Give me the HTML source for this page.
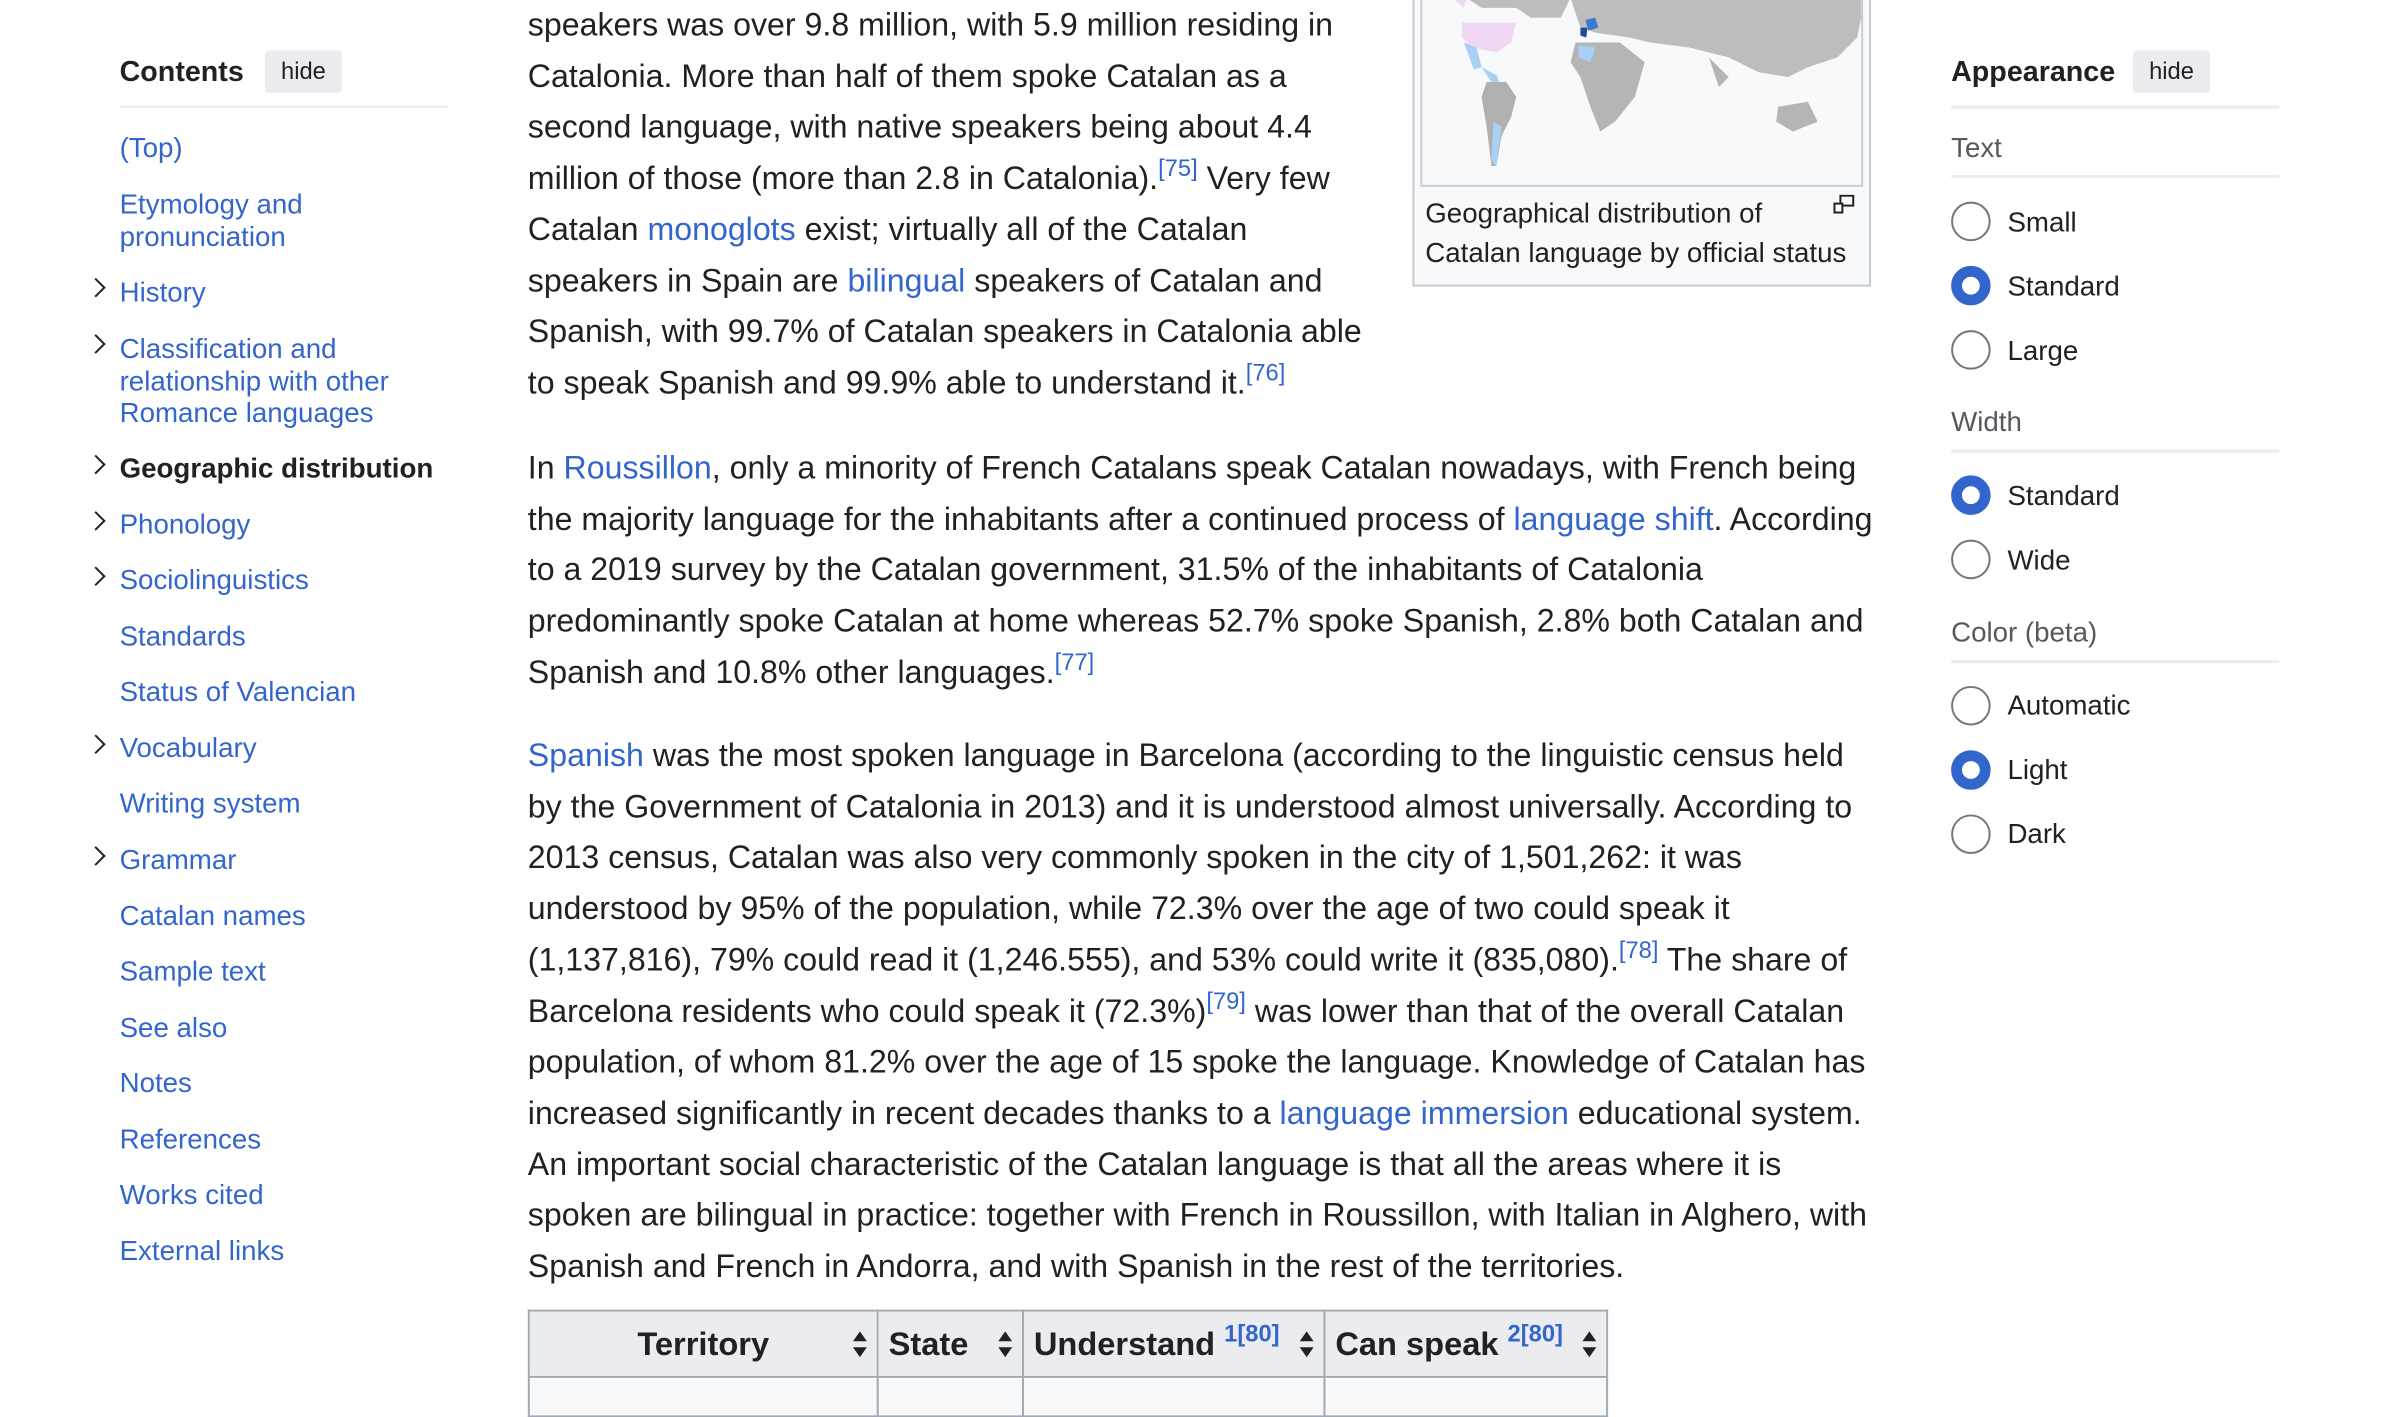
<!DOCTYPE html>
<html><head><meta charset="utf-8"><style>
*{margin:0;padding:0;box-sizing:border-box}
body{width:2400px;height:1398px;overflow:hidden;background:#fff;font-family:"Liberation Sans",Arial,sans-serif;color:#202122;position:relative}
#w{position:absolute;left:0;top:0;width:2430px;height:1420px;transform:scale(0.9884);transform-origin:0 0}
a{color:#3366cc;text-decoration:none}
.p{position:absolute;left:534px;font-size:32.5px;line-height:51.7px;white-space:nowrap}
sup{font-size:24px;vertical-align:0;position:relative;top:-13px;color:#3366cc;line-height:0}
.toc{position:absolute;left:121px;font-size:28px;line-height:32.5px;color:#3366cc;white-space:nowrap}
.chev{position:absolute;left:90px;width:14px;height:14px;border-right:2.5px solid #202122;border-top:2.5px solid #202122;transform:rotate(45deg)}
.hdr{position:absolute;font-size:29px;font-weight:bold;line-height:32px}
.hide{position:absolute;background:#eaecf0;border-radius:4px;font-size:24px;line-height:43px;text-align:center;color:#202122}
.rule{position:absolute;height:3px;background:#eaecf0}
.lbl{position:absolute;left:1974px;font-size:28px;color:#54595d;line-height:32px}
.r{position:absolute;left:1974px;width:40px;height:40px;border-radius:50%;border:2.5px solid #72777d;background:#fff}
.r.on{border:11px solid #3366cc}
.rt{position:absolute;left:2031px;font-size:28px;line-height:32px}
th{background:#eaecf0;border:2px solid #a2a9b1;font-size:33px;font-weight:bold;height:67px;padding:0 10px;text-align:left;position:relative}
td{background:#f8f9fa;border:2px solid #a2a9b1;height:40px}
.sort{position:absolute;right:10px;top:20px;width:14px;height:26px}
.sort:before,.sort:after{content:"";position:absolute;left:0;border-left:7px solid transparent;border-right:7px solid transparent}
.sort:before{top:0;border-bottom:10px solid #202122}
.sort:after{bottom:0;border-top:10px solid #202122}
th sup{font-size:24px;top:-14px}
</style></head><body><div id="w">

<div class="hdr" style="left:121px;top:57px">Contents</div>
<div class="hide" style="left:268px;top:51px;width:78px">hide</div>
<div class="rule" style="left:121px;top:107px;width:333px;height:2px"></div>
<div class="toc" style="top:134px">(Top)</div>
<div class="toc" style="top:191px">Etymology and<br>pronunciation</div>
<div class="chev" style="top:284px"></div><div class="toc" style="top:280px">History</div>
<div class="chev" style="top:341px"></div><div class="toc" style="top:337px">Classification and<br>relationship with other<br>Romance languages</div>
<div class="chev" style="top:463px"></div><div class="toc" style="top:458px;color:#202122;font-weight:bold">Geographic distribution</div>
<div class="chev" style="top:520px"></div><div class="toc" style="top:515px">Phonology</div>
<div class="chev" style="top:576px"></div><div class="toc" style="top:571px">Sociolinguistics</div>
<div class="toc" style="top:628px">Standards</div>
<div class="toc" style="top:684px">Status of Valencian</div>
<div class="chev" style="top:746px"></div><div class="toc" style="top:741px">Vocabulary</div>
<div class="toc" style="top:797px">Writing system</div>
<div class="chev" style="top:859px"></div><div class="toc" style="top:854px">Grammar</div>
<div class="toc" style="top:911px">Catalan names</div>
<div class="toc" style="top:967px">Sample text</div>
<div class="toc" style="top:1024px">See also</div>
<div class="toc" style="top:1080px">Notes</div>
<div class="toc" style="top:1137px">References</div>
<div class="toc" style="top:1193px">Works cited</div>
<div class="toc" style="top:1250px">External links</div>

<div style="position:absolute;left:1429px;top:-4px;width:464px;height:294px;background:#f8f9fa;border:2px solid #c8ccd1"></div>
<div style="position:absolute;left:1437px;top:-4px;width:448px;height:193px;border:2px solid #c8ccd1;background:#f8f9fa;overflow:hidden">
<svg width="448" height="193" viewBox="0 0 448 193">
<path d="M30 0 L45 0 L42 10 Z" fill="#f0d7f4"/>
<path d="M45 0 L150 0 L140 20 L110 20 L95 10 L60 10 Z" fill="#bdbdbd"/>
<path d="M40 25 L95 25 L90 45 L75 55 L50 50 L40 40 Z" fill="#f0d7f4"/>
<path d="M42 45 L55 50 L60 70 L52 72 Z" fill="#a9d0f7"/>
<path d="M60 70 L75 78 L80 90 L70 85 Z" fill="#a9d0f7"/>
<path d="M65 85 L85 85 L95 100 L90 120 L80 140 L75 170 L70 170 L65 130 L60 100 Z" fill="#b0b0b0"/>
<path d="M72 125 L80 130 L75 170 L70 165 Z" fill="#a9d0f7"/>
<path d="M150 0 L448 0 L440 40 L420 60 L390 70 L370 80 L340 75 L310 60 L270 50 L230 45 L210 40 L175 35 L160 30 Z" fill="#bdbdbd"/>
<path d="M155 45 L200 45 L225 65 L215 100 L195 125 L180 135 L170 110 L160 80 L150 65 Z" fill="#b5b5b5"/>
<path d="M158 48 L175 50 L170 65 L158 60 Z" fill="#a9d0f7"/>
<path d="M165 22 L175 20 L178 30 L168 33 Z" fill="#3b78d0"/>
<path d="M160 30 L167 30 L166 40 L160 38 Z" fill="#1d4e96"/>
<path d="M360 110 L390 105 L400 125 L375 135 L358 125 Z" fill="#b5b5b5"/>
<path d="M290 60 L310 80 L300 90 Z" fill="#b5b5b5"/>
</svg></div>
<div style="position:absolute;left:1442px;top:196px;font-size:28px;line-height:40px;white-space:nowrap">Geographical distribution of<br>Catalan language by official status</div>
<svg style="position:absolute;left:1855px;top:197px" width="22" height="20"><rect x="7" y="1" width="13" height="10" fill="none" stroke="#202122" stroke-width="2"/><rect x="1" y="9" width="8" height="9" fill="#fff" stroke="#202122" stroke-width="2"/></svg>

<div class="p" style="top:0">speakers was over 9.8 million, with 5.9 million residing in<br>Catalonia. More than half of them spoke Catalan as a<br>second language, with native speakers being about 4.4<br>million of those (more than 2.8 in Catalonia).<sup>[75]</sup> Very few<br>Catalan <a>monoglots</a> exist; virtually all of the Catalan<br>speakers in Spain are <a>bilingual</a> speakers of Catalan and<br>Spanish, with 99.7% of Catalan speakers in Catalonia able<br>to speak Spanish and 99.9% able to understand it.<sup>[76]</sup></div>

<div class="p" style="top:448px">In <a>Roussillon</a>, only a minority of French Catalans speak Catalan nowadays, with French being<br>the majority language for the inhabitants after a continued process of <a>language shift</a>. According<br>to a 2019 survey by the Catalan government, 31.5% of the inhabitants of Catalonia<br>predominantly spoke Catalan at home whereas 52.7% spoke Spanish, 2.8% both Catalan and<br>Spanish and 10.8% other languages.<sup>[77]</sup></div>

<div class="p" style="top:739px"><a>Spanish</a> was the most spoken language in Barcelona (according to the linguistic census held<br>by the Government of Catalonia in 2013) and it is understood almost universally. According to<br>2013 census, Catalan was also very commonly spoken in the city of 1,501,262: it was<br>understood by 95% of the population, while 72.3% over the age of two could speak it<br>(1,137,816), 79% could read it (1,246.555), and 53% could write it (835,080).<sup>[78]</sup> The share of<br>Barcelona residents who could speak it (72.3%)<sup>[79]</sup> was lower than that of the overall Catalan<br>population, of whom 81.2% over the age of 15 spoke the language. Knowledge of Catalan has<br>increased significantly in recent decades thanks to a <a>language immersion</a> educational system.<br>An important social characteristic of the Catalan language is that all the areas where it is<br>spoken are bilingual in practice: together with French in Roussillon, with Italian in Alghero, with<br>Spanish and French in Andorra, and with Spanish in the rest of the territories.</div>

<table style="position:absolute;left:534px;top:1325px;border-collapse:collapse;width:1093px">
<tr><th style="width:353px;text-align:center">Territory<span class="sort"></span></th><th style="width:147px">State<span class="sort"></span></th><th style="width:305px">Understand <sup>1[80]</sup><span class="sort"></span></th><th>Can speak <sup>2[80]</sup><span class="sort"></span></th></tr>
<tr><td></td><td></td><td></td><td></td></tr>
</table>

<div class="hdr" style="left:1974px;top:57px">Appearance</div>
<div class="hide" style="left:2158px;top:51px;width:78px">hide</div>
<div class="rule" style="left:1974px;top:107px;width:332px"></div>
<div class="lbl" style="top:134px">Text</div>
<div class="rule" style="left:1974px;top:177px;width:332px"></div>
<div class="r" style="top:204px"></div><div class="rt" style="top:209px">Small</div>
<div class="r on" style="top:269px"></div><div class="rt" style="top:274px">Standard</div>
<div class="r" style="top:334px"></div><div class="rt" style="top:339px">Large</div>
<div class="lbl" style="top:411px">Width</div>
<div class="rule" style="left:1974px;top:455px;width:332px"></div>
<div class="r on" style="top:481px"></div><div class="rt" style="top:486px">Standard</div>
<div class="r" style="top:546px"></div><div class="rt" style="top:551px">Wide</div>
<div class="lbl" style="top:624px">Color (beta)</div>
<div class="rule" style="left:1974px;top:668px;width:332px"></div>
<div class="r" style="top:694px"></div><div class="rt" style="top:698px">Automatic</div>
<div class="r on" style="top:759px"></div><div class="rt" style="top:763px">Light</div>
<div class="r" style="top:824px"></div><div class="rt" style="top:828px">Dark</div>
</div></body></html>
